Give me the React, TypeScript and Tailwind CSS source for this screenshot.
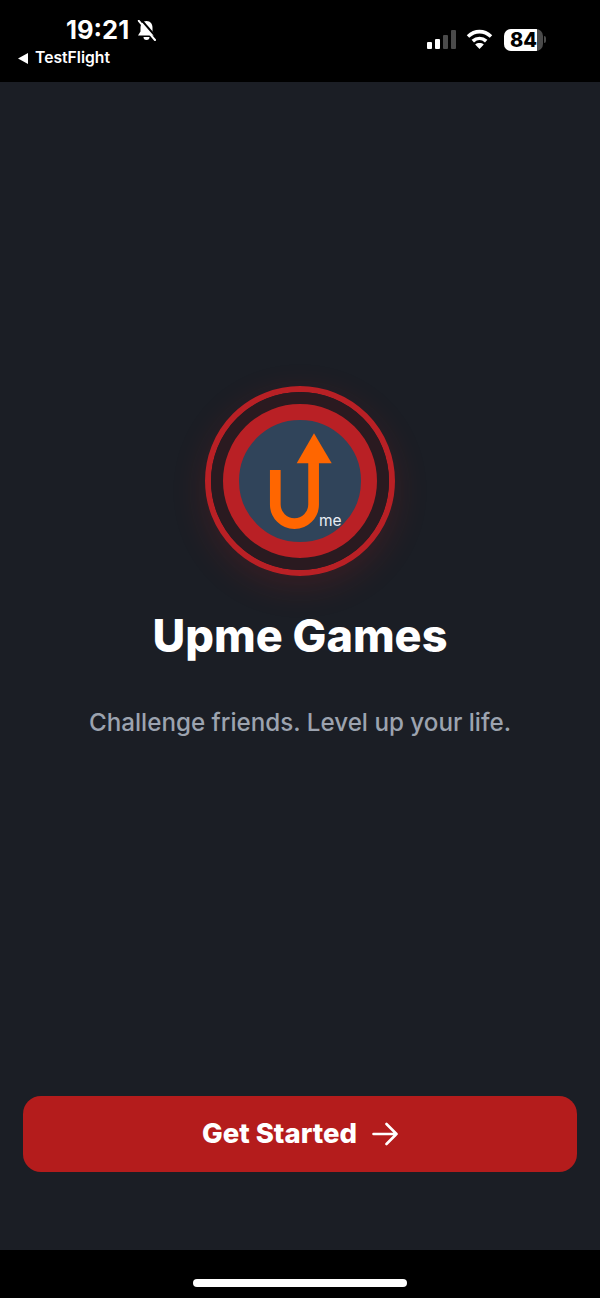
const BARS = [
  { h: "h-[7px]", c: "bg-white" },
  { h: "h-[10px]", c: "bg-white" },
  { h: "h-[14px]", c: "bg-[#4a4a4a]" },
  { h: "h-[19px]", c: "bg-[#4a4a4a]" },
];

function StatusBar() {
  return (
    <div className="h-[82px] shrink-0 bg-black flex justify-between text-white">
      <div className="pl-[18px] pt-[15px]">
        <div className="pl-[48px] flex items-center gap-[7px]">
          <span className="text-[25.5px] leading-[30px] font-bold">19:21</span>
          <svg width="21" height="21" viewBox="0 0 21 21" fill="none">
            <path d="M10.5 1C6.5 1 4.5 4.2 4.5 8V11.5L2 15.5H19L16.5 11.5V8C16.5 4.2 14.5 1 10.5 1Z" fill="#fff" />
            <path d="M7.5 17H13.5A3 3 0 0 1 7.5 17Z" fill="#fff" />
            <path d="M5 -0.5L21.5 18.5" stroke="#000" strokeWidth="2" />
            <path d="M2.8 0.8L19 20" stroke="#fff" strokeWidth="2" strokeLinecap="round" />
          </svg>
        </div>
        <div className="mt-[3px] flex items-center gap-[7px]">
          <svg width="10" height="11" viewBox="0 0 10 11">
            <path d="M10 0V11L0 5.5Z" fill="#fff" />
          </svg>
          <span className="text-[15.7px] leading-[20px] font-semibold">TestFlight</span>
        </div>
      </div>
      <div className="pt-[29px] pr-[54px] flex items-start">
        <div className="flex items-end gap-[3px] h-[20px] mr-[10px]">
          {BARS.map((b, i) => (
            <div key={i} className={`w-[5px] rounded-[1px] ${b.h} ${b.c}`} />
          ))}
        </div>
        <svg width="27" height="20" viewBox="0 0 27 20" fill="none" className="mr-[11px]">
          <path d="M2 7.5C9 1 18 1 25 7.5" stroke="#fff" strokeWidth="3.6" />
          <path d="M6.8 12.2C10.8 8.6 16.2 8.6 20.2 12.2" stroke="#fff" strokeWidth="3.6" />
          <path d="M13.5 20L9.2 15.5C11.6 13.6 15.4 13.6 17.8 15.5Z" fill="#fff" />
        </svg>
        <div className="w-[39px] h-[22px] rounded-[7px] bg-[#4a4a4a] overflow-hidden">
          <div className="w-[33px] h-full bg-white flex items-center justify-center pl-[6px]">
            <span className="text-[20px] leading-none font-extrabold text-black">84</span>
          </div>
        </div>
        <div className="w-[2px] h-[7px] mt-[7px] ml-[1px] rounded-r-sm bg-[#4a4a4a]" />
      </div>
    </div>
  );
}

function Logo() {
  return (
    <div className="w-[190px] h-[190px] rounded-full shadow-[0_10px_34px_rgba(185,28,28,0.2)]">
      <svg width="190" height="190" viewBox="0 0 190 190" fill="none">
        <circle cx="95" cy="95" r="92" stroke="#b92025" strokeWidth="6" />
        <circle cx="95" cy="95" r="89" fill="#2a1a20" />
        <circle cx="95" cy="95" r="69" fill="#30445a" stroke="#b92025" strokeWidth="16" />
        <path d="M70.3 84V118.5A19.15 19.15 0 0 0 108.6 118.5V75" stroke="#ff6600" strokeWidth="10.7" />
        <path d="M109 47.3L126.7 77.3H91.7Z" fill="#ff6600" />
        <text x="114" y="139.5" fontSize="15.5" fill="#e8edf3" fontFamily="Inter, sans-serif">
          me
        </text>
      </svg>
    </div>
  );
}

export default function App() {
  return (
    <div className="w-[600px] h-[1298px] flex flex-col bg-black overflow-hidden font-['Inter',sans-serif]">
      <StatusBar />
      <main className="flex-1 bg-[#1b1e25] flex flex-col items-center pt-[304px] px-[23px]">
        <Logo />
        <h1 className="mt-[34px] text-[45px] leading-[52px] font-extrabold text-white">Upme Games</h1>
        <p className="mt-[43px] text-[24.2px] leading-[36px] font-medium text-[#9ca3af]">
          Challenge friends. Level up your life.
        </p>
        <button className="mt-auto mb-[78px] w-full h-[76px] rounded-[18px] bg-[#b41c1c] flex items-center justify-center gap-[15px] text-white">
          <span className="text-[27.5px] font-extrabold">Get Started</span>
          <svg width="26" height="24" viewBox="0 0 26 24" fill="none" stroke="#fff" strokeWidth="2.6" strokeLinecap="round" strokeLinejoin="round">
            <path d="M1.5 12H24.5M14.5 2L24.5 12L14.5 22" />
          </svg>
        </button>
      </main>
      <div className="h-[48px] shrink-0 bg-black flex items-start justify-center pt-[29px]">
        <div className="w-[214px] h-[8px] rounded-full bg-white" />
      </div>
    </div>
  );
}
